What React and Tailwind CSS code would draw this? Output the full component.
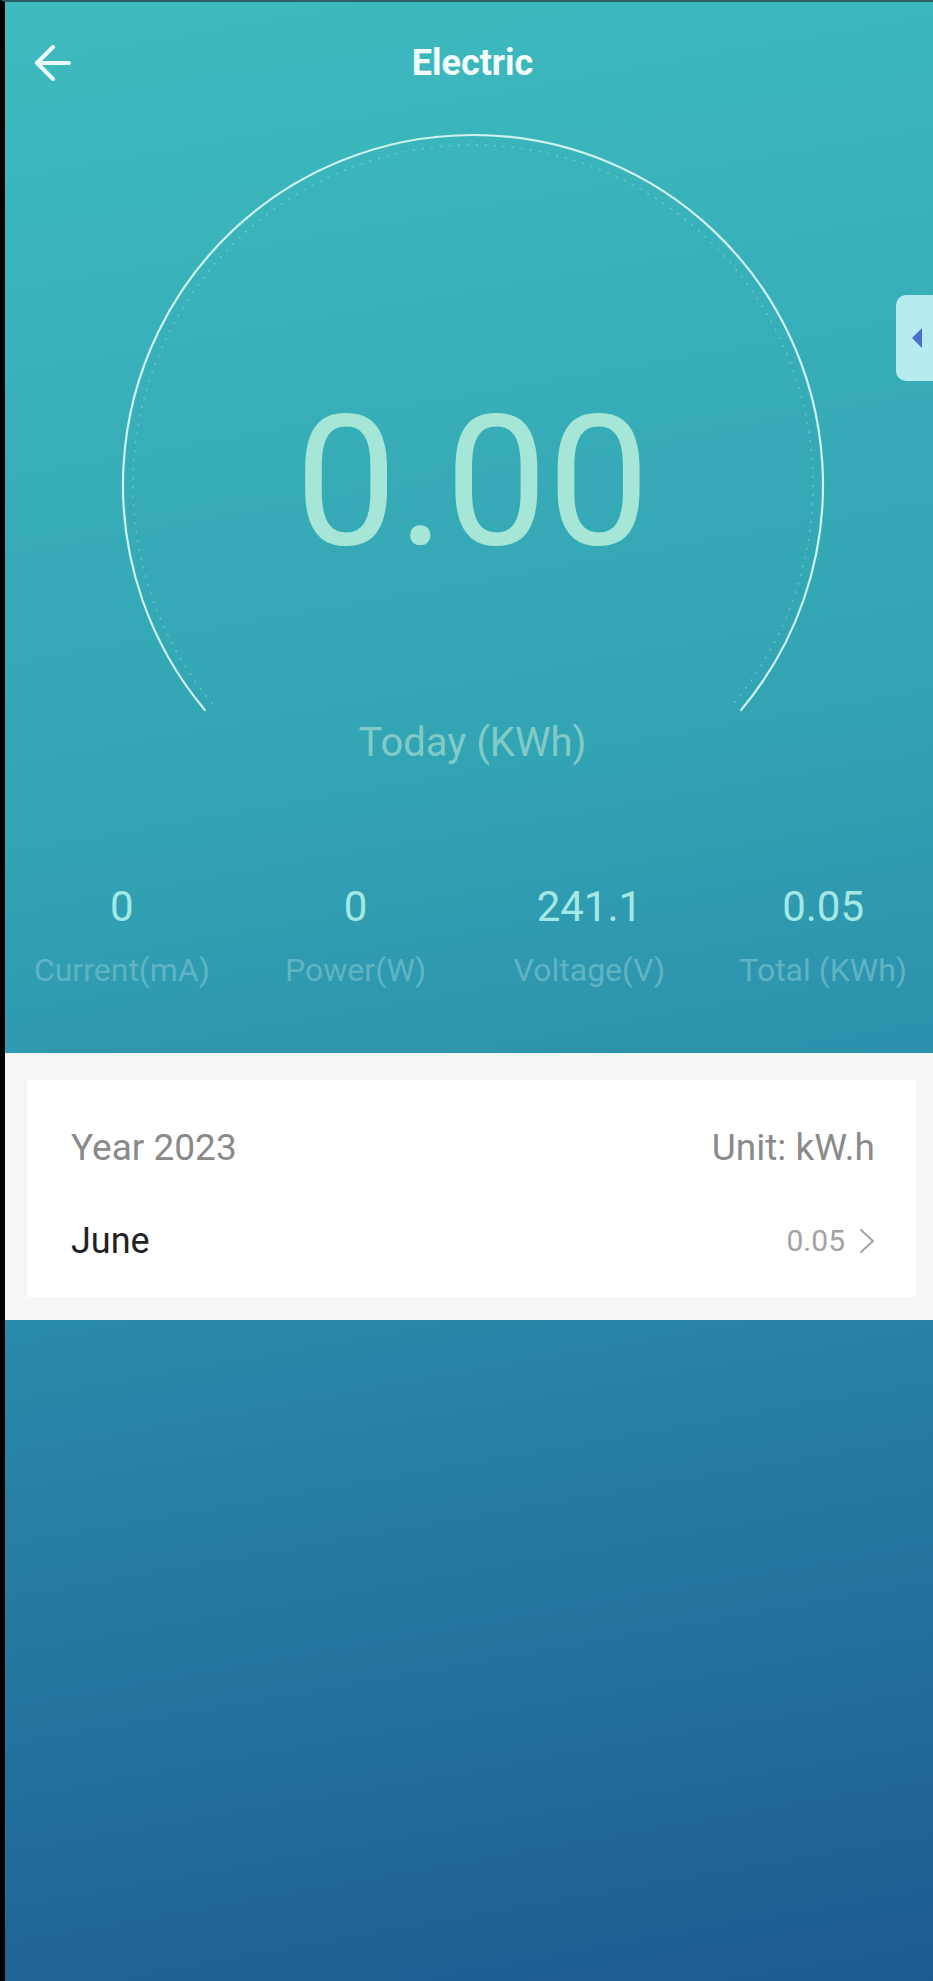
import React from 'react';

const stats = [
  { value: '0', label: 'Current(mA)' },
  { value: '0', label: 'Power(W)' },
  { value: '241.1', label: 'Voltage(V)' },
  { value: '0.05', label: 'Total (KWh)' },
];

// gauge geometry, in gauge-block coordinates
const cx = 468;
const cy = 361;
const r = 350;
const ang = (40 * Math.PI) / 180;
const x1 = cx - r * Math.cos(ang);
const x2 = cx + r * Math.cos(ang);
const yEnd = cy + r * Math.sin(ang);
const ri = 340;
const xi1 = cx - ri * Math.cos(ang);
const xi2 = cx + ri * Math.cos(ang);
const yiEnd = cy + ri * Math.sin(ang);

const App = () => {
  return (
    <div className="relative w-[933px] min-h-[1981px] overflow-hidden border-l-[5px] border-t-2 border-l-black border-t-[#2b5f66] bg-[linear-gradient(170deg,#3ebbbf_0%,#32a3b3_40%,#2a8aa9_62%,#1c5b92_100%)] font-['Roboto','Liberation_Sans',sans-serif]">
      <div className="w-[935px]">
        {/* Header */}
        <div className="grid h-[122px] grid-cols-[1fr_auto_1fr] items-center">
          <div className="pl-[29px]">
            <svg width="38" height="36" viewBox="0 0 38 36" fill="none" stroke="#eafcfb" strokeWidth="4" strokeLinecap="round" strokeLinejoin="round">
              <path d="M35 18H3" />
              <path d="M19 2L3 18l16 16" />
            </svg>
          </div>
          <h1 className="text-[36px] font-bold leading-none text-[#f2fdfc]">Electric</h1>
          <div />
        </div>

        {/* Gauge */}
        <div className="relative flex flex-col items-center pt-[267px]">
          <svg className="absolute left-0 top-0" width="935" height="640" viewBox="0 0 935 640" fill="none">
            <path
              d={`M ${x1} ${yEnd} A ${r} ${r} 0 1 1 ${x2} ${yEnd}`}
              stroke="#cdf3ef"
              strokeWidth="2.2"
              strokeLinecap="round"
            />
            <path
              d={`M ${xi1} ${yiEnd} A ${ri} ${ri} 0 1 1 ${xi2} ${yiEnd}`}
              stroke="#cdf3ef"
              strokeOpacity="0.35"
              strokeWidth="1.5"
              strokeDasharray="2 7"
            />
          </svg>
          <div className="relative text-[182px] leading-none text-[#a6e6d6]">0.00</div>
          <div className="relative mt-[150px] text-[40px] leading-none text-[#80cbc8]">Today (KWh)</div>
        </div>

        {/* Stats */}
        <div className="mt-[123px] grid grid-cols-4">
          {stats.map((s) => (
            <div key={s.label} className="flex flex-col items-center">
              <div className="text-[42px] leading-none text-[#a4e8e6]">{s.value}</div>
              <div className="mt-[26px] text-[32px] leading-none text-[#5fb4c2]">{s.label}</div>
            </div>
          ))}
        </div>

        {/* Monthly panel */}
        <div className="mt-[67px] bg-[#f5f7f7] pb-[23px] pl-[22px] pr-[24px] pt-[27px]">
          <div className="h-[217px] bg-white pl-[44px] pr-[41px] pt-[20px]">
            <div className="flex h-[94px] items-center justify-between text-[37px] leading-none text-[#8a8a8a]">
              <span>Year 2023</span>
              <span>Unit: kW.h</span>
            </div>
            <div className="flex h-[94px] items-center justify-between">
              <span className="text-[36px] leading-none text-[#222222]">June</span>
              <div className="flex items-center gap-[14px]">
                <span className="text-[30px] leading-none text-[#a3a3a3]">0.05</span>
                <svg width="16" height="26" viewBox="0 0 16 26" fill="none" stroke="#a3a3a3" strokeWidth="2" strokeLinecap="round" strokeLinejoin="round">
                  <path d="M2 2l12 11L2 24" />
                </svg>
              </div>
            </div>
          </div>
        </div>
      </div>

      {/* Side drawer tab */}
      <div className="absolute left-[891px] top-[293px] flex h-[86px] w-[50px] items-center rounded-[10px] bg-[#b6ecef] pl-[16px]">
        <svg width="10" height="20" viewBox="0 0 10 20">
          <path d="M0 10L10 0v20z" fill="#4c6fcf" />
        </svg>
      </div>
    </div>
  );
};

export default App;
